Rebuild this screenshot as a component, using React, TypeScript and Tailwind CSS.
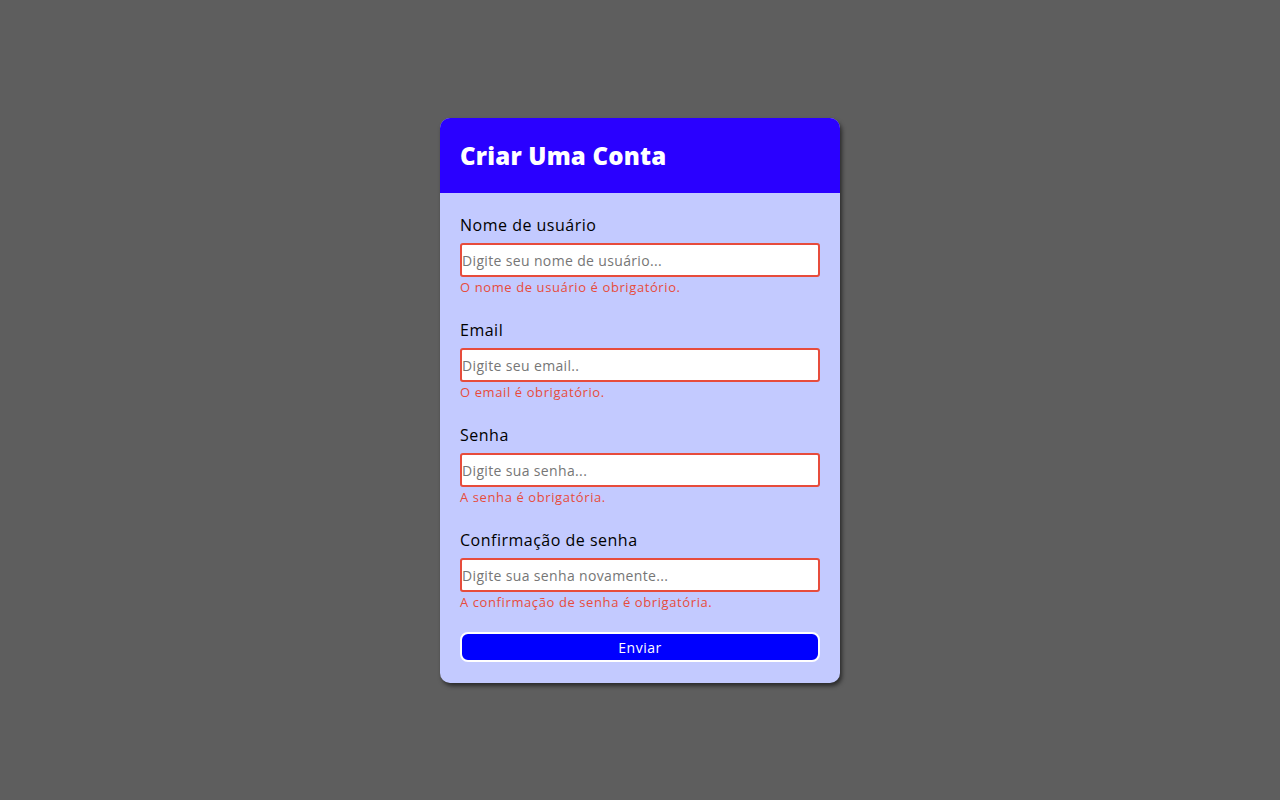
import React from "react";

interface Field {
  label: string;
  type: string;
  placeholder: string;
  error: string;
}

const fields: Field[] = [
  {
    label: "Nome de usuário",
    type: "text",
    placeholder: "Digite seu nome de usuário...",
    error: "O nome de usuário é obrigatório.",
  },
  {
    label: "Email",
    type: "email",
    placeholder: "Digite seu email..",
    error: "O email é obrigatório.",
  },
  {
    label: "Senha",
    type: "password",
    placeholder: "Digite sua senha...",
    error: "A senha é obrigatória.",
  },
  {
    label: "Confirmação de senha",
    type: "password",
    placeholder: "Digite sua senha novamente...",
    error: "A confirmação de senha é obrigatória.",
  },
];

const FormField = ({ field }: { field: Field }) => (
  <div className="flex flex-col mb-[21px]">
    <label className="mb-[6px] text-[16px] leading-6 tracking-[0.5px] text-black">{field.label}</label>
    <input
      type={field.type}
      placeholder={field.placeholder}
      className="h-[34px] w-full rounded-[3px] border-2 border-[#e74c3c] bg-white px-0 text-[14px] tracking-[0.35px] text-black placeholder:text-[#767676] outline-none"
    />
    <span className="text-[13px] leading-5 tracking-[0.6px] text-[#e74c3c]">{field.error}</span>
  </div>
);

export default function App() {
  return (
    <div
      className="flex min-h-screen w-full items-start justify-center bg-[#5e5e5e] pt-[118px]"
      style={{ fontFamily: '"Open Sans", sans-serif' }}
    >
      <div className="w-[400px] overflow-hidden rounded-[10px] bg-[#c3caff] shadow-[2px_3px_4px_rgba(0,0,0,0.55)]">
        <div className="flex h-[75px] items-center bg-[#2a00ff] px-5">
          <h1 className="text-[24px] font-extrabold tracking-[0.2px] text-white">Criar Uma Conta</h1>
        </div>
        <form className="flex flex-col px-5 pt-5 pb-[21px]">
          {fields.map((f) => (
            <FormField key={f.label} field={f} />
          ))}
          <button
            type="button"
            className="-mt-[1px] h-[30px] w-full rounded-[8px] border-2 border-white bg-[#0000ff] text-[14px] font-medium tracking-[0.5px] text-white"
          >
            Enviar
          </button>
        </form>
      </div>
    </div>
  );
}
